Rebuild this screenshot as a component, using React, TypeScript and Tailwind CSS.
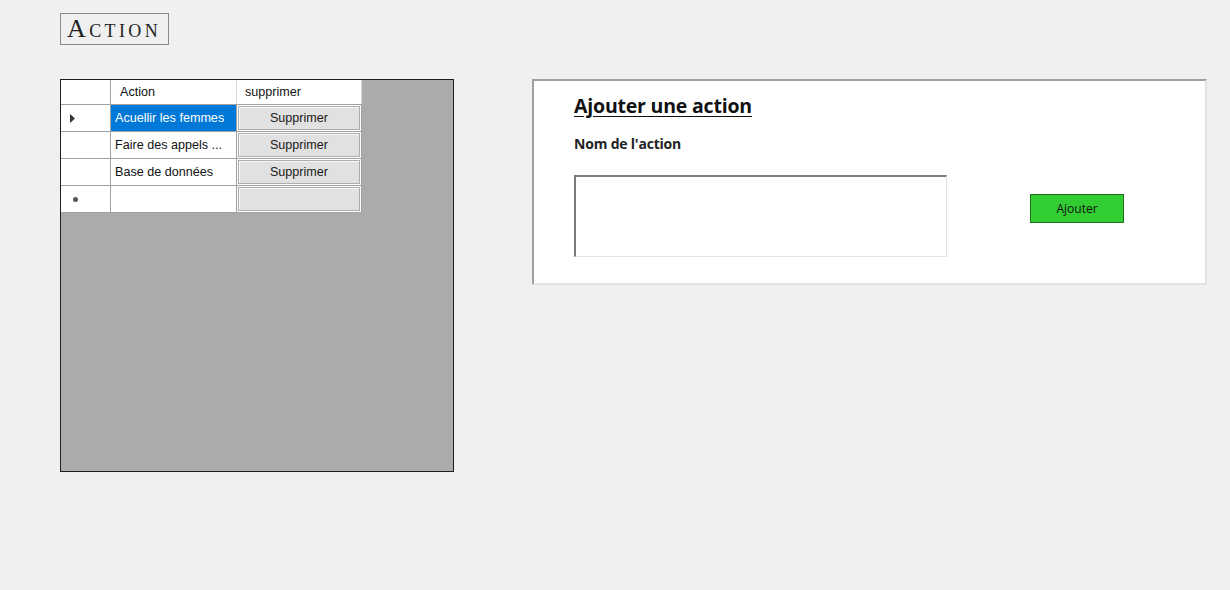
import React from "react";

const rows = [
  { name: "Acuellir les femmes", selected: true },
  { name: "Faire des appels ...", selected: false },
  { name: "Base de données", selected: false },
];

function SupBtn({ label }: { label?: string }) {
  return (
    <div className="h-full p-[1px]">
      <div className="h-full w-full bg-[#e1e1e1] border border-[#adadad] shadow-[inset_1px_1px_0_#f8f8f8] flex items-center justify-center text-[12.6px] text-[#1a1a1a]">
        {label}
      </div>
    </div>
  );
}

export default function App() {
  return (
    <div className="w-[1230px] h-[590px] bg-[#f0f0f0] relative overflow-hidden" style={{ fontFamily: '"Liberation Sans", Arial, sans-serif' }}>
      <div className="pt-[13px] pl-[60px]">
        <div
          className="inline-flex items-center h-[32px] pl-[6px] pr-[7px] border border-[#8a8a8a] text-[26px] leading-none text-[#222] tracking-[3.4px]"
          style={{ fontFamily: '"Liberation Serif", "Times New Roman", serif', fontVariant: "small-caps" }}
        >
          Action
        </div>
      </div>

      <div className="flex items-start mt-[34px] pl-[60px] gap-[78px]">
        {/* Grid */}
        <div className="w-[394px] h-[393px] bg-[#ababab] border border-[#1e1e1e] shrink-0">
          <div className="flex flex-col w-[301px]">
            {/* header */}
            <div className="flex h-[25px] bg-white border-b border-[#a0a0a0]">
              <div className="w-[50px] border-r border-[#a0a0a0]" />
              <div className="w-[126px] border-r border-[#d8d8d8] pl-[9px] flex items-center text-[12.6px] text-[#111]">Action</div>
              <div className="w-[125px] pl-[8px] flex items-center text-[12.6px] text-[#111] border-r border-[#d8d8d8]">supprimer</div>
            </div>
            {rows.map((r, i) => (
              <div key={i} className="flex h-[27px] border-b border-[#a0a0a0]">
                <div className="w-[50px] bg-white border-r border-[#a0a0a0] flex items-center pl-[9px]">
                  {r.selected && (
                    <svg width="5" height="9" viewBox="0 0 5 9">
                      <path d="M0 0 L5 4.5 L0 9 Z" fill="#333" />
                    </svg>
                  )}
                </div>
                <div
                  className={`w-[126px] border-r border-[#a0a0a0] flex items-center pl-[4px] text-[12.6px] whitespace-nowrap overflow-hidden ${
                    r.selected ? "bg-[#0078d7] text-white" : "bg-white text-[#111]"
                  }`}
                >
                  {r.name}
                </div>
                <div className="w-[125px] bg-white border-r border-[#a0a0a0]">
                  <SupBtn label="Supprimer" />
                </div>
              </div>
            ))}
            <div className="flex h-[27px] border-b border-[#a0a0a0]">
              <div className="w-[50px] bg-white border-r border-[#a0a0a0] flex items-center pl-[12px]">
                <div className="w-[5px] h-[5px] rounded-full bg-[#555]" />
              </div>
              <div className="w-[126px] bg-white border-r border-[#a0a0a0]" />
              <div className="w-[125px] bg-white border-r border-[#a0a0a0]">
                <SupBtn />
              </div>
            </div>
          </div>
        </div>

        {/* Right panel */}
        <div
          className="w-[675px] h-[206px] bg-white border-t-2 border-l-2 border-t-[#a0a0a0] border-l-[#a0a0a0] border-b-2 border-r-2 border-b-[#e3e3e3] border-r-[#e3e3e3] pl-[40px] pt-[12px]"
          style={{ fontFamily: '"Open Sans", "Noto Sans", sans-serif' }}
        >
          <div className="text-[19.5px] font-bold underline underline-offset-[3px] text-[#111] leading-[26px] tracking-[-0.2px]">Ajouter une action</div>
          <div className="mt-[15px] text-[14px] font-bold text-[#222] leading-[20px] tracking-[-0.2px]">Nom de l'action</div>
          <div className="flex items-start mt-[21px]">
            <div className="w-[373px] h-[82px] bg-white border-t-2 border-l-2 border-t-[#7a7a7a] border-l-[#7a7a7a] border-b border-r border-b-[#e3e3e3] border-r-[#e3e3e3]" />
            <button className="ml-[83px] mt-[19px] w-[94px] h-[29px] bg-[#32cd32] border border-[#1f6f1f] text-[12px] text-[#111] flex items-center justify-center">
              Ajouter
            </button>
          </div>
        </div>
      </div>
    </div>
  );
}
